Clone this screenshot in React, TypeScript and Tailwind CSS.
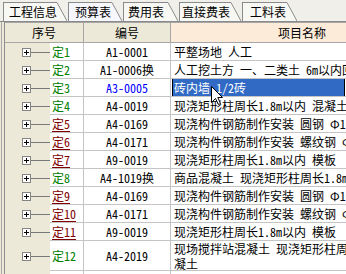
type Row = {
  no: number;
  red: boolean;
  code: string;
  name: string;
  blue?: boolean;
  selected?: boolean;
  tall?: boolean;
};

const rows: Row[] = [
  { no: 1, red: false, code: "A1-0001", name: "平整场地 人工" },
  { no: 2, red: false, code: "A1-0006换", name: "人工挖土方 一、二类土 6m以内回填" },
  { no: 3, red: false, code: "A3-0005", name: "砖内墙 1/2砖", blue: true, selected: true },
  { no: 4, red: false, code: "A4-0019", name: "现浇矩形柱周长1.8m以内 混凝土" },
  { no: 5, red: true, code: "A4-0169", name: "现浇构件钢筋制作安装 圆钢 Φ10以内" },
  { no: 6, red: true, code: "A4-0171", name: "现浇构件钢筋制作安装 螺纹钢 Φ10以上" },
  { no: 7, red: true, code: "A9-0019", name: "现浇矩形柱周长1.8m以内 模板" },
  { no: 8, red: false, code: "A4-1019换", name: "商品混凝土 现浇矩形柱周长1.8m以内" },
  { no: 9, red: true, code: "A4-0169", name: "现浇构件钢筋制作安装 圆钢 Φ10以内" },
  { no: 10, red: true, code: "A4-0171", name: "现浇构件钢筋制作安装 螺纹钢 Φ10以上" },
  { no: 11, red: true, code: "A9-0019", name: "现浇矩形柱周长1.8m以内 模板" },
  { no: 12, red: false, code: "A4-2019", name: "现场搅拌站混凝土 现浇矩形柱周长1.8m以内 混", tall: true },
];

const tabs = [
  { label: "工程信息", box: "w-[54px] pl-[5px]", active: false },
  { label: "预算表", box: "w-[44px] pl-[6px]", active: true },
  { label: "费用表", box: "w-[45px] pl-[4px]", active: false },
  { label: "直接费表", box: "w-[52px] pl-[2px]", active: false },
  { label: "工料表", box: "w-[45px] pl-[7px]", active: false },
];

function TabBar() {
  return (
    <div className="flex h-[22px] border-b border-[#8a8a8a] pl-[3px]">
      {tabs.map((t) => (
        <div key={t.label} className="mt-[2px] mr-px flex h-[19px]">
          <div
            className={`flex h-full items-center border-t border-l border-[#8a8a8a] ${t.box} ${
              t.active ? "bg-[#f6f6fd]" : "bg-[#f7f7f4]"
            }`}
          >
            {t.label}
          </div>
          <svg width="10" height="19" className="block">
            <polygon points="0,0 0.5,0 10,19 0,19" fill={t.active ? "#f6f6fd" : "#f7f7f4"} />
            <line x1="0" y1="0.5" x2="10" y2="19" stroke="#8a8a8a" strokeWidth="1" />
          </svg>
        </div>
      ))}
    </div>
  );
}

function Frame() {
  return (
    <div className="flex w-[5px] bg-[#ece9d8]">
      <div className="w-px" />
      <div className="w-px bg-[#a8a8a8]" />
      <div className="w-[2px]" />
      <div className="w-px bg-[#8e8e8e]" />
    </div>
  );
}

function PlusBox() {
  return (
    <div className="relative h-[9px] w-[9px] shrink-0 border border-[#848484] bg-white">
      <div className="absolute left-[1px] top-[3px] h-px w-[5px] bg-black" />
      <div className="absolute left-[3px] top-[1px] h-[5px] w-px bg-black" />
    </div>
  );
}

function DataRow({ r }: { r: Row }) {
  const h = r.tall ? "h-[30px]" : "h-[18px]";
  return (
    <div className={`flex ${h}`}>
      <div className="flex w-[45px] items-center bg-[#ece9d8] pl-[17px]">
        <PlusBox />
        <div className="h-px flex-1 bg-[#7a7a7a]" />
      </div>
      <div className="flex w-[34px] items-center border-r border-b border-[#c4c4c4] bg-white pl-[2px]">
        <span className={r.red ? "text-[#800000] underline underline-offset-2" : "text-[#008000]"}>
          定{r.no}
        </span>
      </div>
      <div
        className={`flex w-[87px] items-center justify-center border-r border-b border-[#c4c4c4] bg-white ${
          r.blue ? "text-[#0000ff]" : ""
        }`}
      >
        {r.code}
      </div>
      <div className="flex w-[262px] items-center border-b border-[#c4c4c4] bg-white pl-[3px] whitespace-nowrap">
        {r.selected ? (
          <div className="-ml-[2px] flex h-full w-[173px] items-center border-r border-l border-black bg-[#316ac5] pl-[1px] text-white">
            {r.name}
          </div>
        ) : r.tall ? (
          <div className="leading-[15px]">
            {r.name}
            <br />
            凝土
          </div>
        ) : (
          r.name
        )}
      </div>
    </div>
  );
}

function Cursor() {
  return (
    <svg width="13" height="20" className="absolute left-[211px] top-[86px]">
      <path
        d="M0.5 0.5 L0.5 16.5 L4.5 12.5 L7.5 18.5 L9.5 17.5 L6.8 11.5 L11.5 11.5 Z"
        fill="white"
        stroke="black"
        strokeWidth="1"
        strokeLinejoin="miter"
      />
    </svg>
  );
}

export default function App() {
  return (
    <div className="relative h-[274px] w-[346px] overflow-hidden bg-[#f0efe9] font-['Noto_Sans_CJK_SC','Liberation_Sans',sans-serif] text-[12px] leading-none text-black [font-feature-settings:'hwid']">
      <TabBar />
      <div className="flex">
        <Frame />
        <div className="flex flex-col">
          <div className="flex h-[21px] border-y border-[#a6a6a6]">
            <div className="flex w-[79px] items-center justify-center border-r border-[#a6a6a6] bg-[#ece9d8]">
              序号
            </div>
            <div className="flex w-[87px] items-center justify-center border-r border-[#a6a6a6] bg-[#ece9d8]">
              编号
            </div>
            <div className="flex w-[262px] items-center justify-center bg-[#fdebd9]">项目名称</div>
          </div>
          {rows.map((r) => (
            <DataRow key={r.no} r={r} />
          ))}
          <div className="flex h-[12px]">
            <div className="w-[45px] bg-[#ece9d8]" />
            <div className="w-[34px] border-r border-[#c4c4c4] bg-white" />
            <div className="w-[87px] border-r border-[#c4c4c4] bg-white" />
            <div className="w-[262px] bg-white" />
          </div>
        </div>
      </div>
      <Cursor />
    </div>
  );
}
